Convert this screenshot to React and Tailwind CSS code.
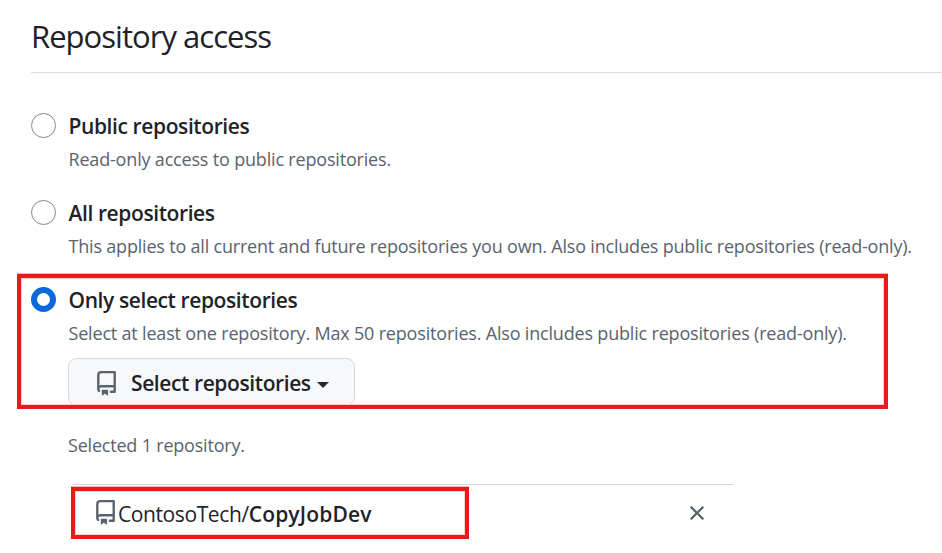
const RepoIcon = ({ className }) => (
  <svg viewBox="0 0 16 16" fill="currentColor" className={className}>
    <path d="M2 2.5A2.5 2.5 0 0 1 4.5 0h8.75a.75.75 0 0 1 .75.75v12.5a.75.75 0 0 1-.75.75h-2.5a.75.75 0 0 1 0-1.5h1.75v-2h-8a1 1 0 0 0-.714 1.7.75.75 0 1 1-1.072 1.05A2.495 2.495 0 0 1 2 11.5Zm10.5-1h-8a1 1 0 0 0-1 1v6.708A2.486 2.486 0 0 1 4.5 9h8ZM5 12.25a.25.25 0 0 1 .25-.25h3.5a.25.25 0 0 1 .25.25v3.25a.25.25 0 0 1-.4.2l-1.45-1.087a.249.249 0 0 0-.3 0L5.4 15.7a.25.25 0 0 1-.4-.2Z" />
  </svg>
);

const XIcon = ({ className }) => (
  <svg viewBox="0 0 16 16" fill="currentColor" className={className}>
    <path d="M3.72 3.72a.75.75 0 0 1 1.06 0L8 6.94l3.22-3.22a.749.749 0 0 1 1.275.326.749.749 0 0 1-.215.734L9.06 8l3.22 3.22a.749.749 0 0 1-.326 1.275.749.749 0 0 1-.734-.215L8 9.06l-3.22 3.22a.751.751 0 0 1-1.042-.018.751.751 0 0 1-.018-1.042L6.94 8 3.72 4.78a.75.75 0 0 1 0-1.06Z" />
  </svg>
);

const options = [
  {
    title: "Public repositories",
    description: "Read-only access to public repositories.",
    descriptionClass: "tracking-[-0.18px]",
  },
  {
    title: "All repositories",
    description:
      "This applies to all current and future repositories you own. Also includes public repositories (read-only).",
    descriptionClass: "tracking-[-0.195px]",
  },
  {
    title: "Only select repositories",
    description:
      "Select at least one repository. Max 50 repositories. Also includes public repositories (read-only).",
    descriptionClass: "tracking-[-0.185px]",
    selected: true,
  },
];

function Option({ title, description, descriptionClass, selected }) {
  return (
    <label className="flex gap-[12.5px]">
      <span
        className={
          selected
            ? "mt-[5px] size-[25px] shrink-0 rounded-full border-[6px] border-[#0969da] bg-white"
            : "mt-[5px] size-[25px] shrink-0 rounded-full border border-[#818b98] bg-white"
        }
      />
      <span className="flex flex-col whitespace-nowrap">
        <span className="text-[21px] leading-9 font-semibold">
          <span className="tracking-[-0.4px]">{title}</span>
        </span>
        <span className="text-[18px] leading-[30px] text-[#59636e]">
          <span className={descriptionClass}>{description}</span>
        </span>
      </span>
    </label>
  );
}

export default function App() {
  return (
    <main className="relative h-[553px] w-[942px] overflow-hidden bg-white pl-[31px] font-['Open_Sans','Noto_Sans',sans-serif] text-[#1f2328]">
      <h2 className="h-[73px] border-b border-[#d9dee4] pt-[14px] text-[31px] leading-[44px]">
        <span className="tracking-[-0.97px]">Repository access</span>
      </h2>
      <div className="flex flex-col gap-[21px] pt-[35px]">
        {options.map((o) => (
          <Option key={o.title} {...o} />
        ))}
      </div>
      <div className="ml-[37px] pt-[10px]">
        <button className="flex h-12 w-[287px] items-center rounded-[9px] border border-[#d1d9e0] bg-[#f6f8fa] pt-[3px] pl-[25px] text-[21px] font-semibold whitespace-nowrap">
          <RepoIcon className="size-[25px] shrink-0 text-[#59636e]" />
          <span className="ml-3 w-[186px] text-left tracking-[-0.4px]">Select repositories</span>
          <span className="mt-[2px] border-x-[6px] border-t-[6px] border-x-transparent border-t-[#25292e]" />
        </button>
        <p className="mt-6 text-[18px] leading-[30px] text-[#59636e]">
          <span className="tracking-[-0.2px]">Selected 1 repository.</span>
        </p>
        <div className="mt-6 ml-[5px] flex h-[58px] w-[661px] items-center border-t border-[#d1d9e0] pl-5 text-[21px] leading-9 whitespace-nowrap">
          <RepoIcon className="mb-[2px] size-[25px] shrink-0 text-[#59636e]" />
          <span className="tracking-[-0.4px]">ContosoTech/</span>
          <b className="font-semibold tracking-[0.15px]">CopyJobDev</b>
          <XIcon className="mr-[25px] mb-px ml-auto size-6 text-[#59636e]" />
        </div>
      </div>
      <div className="absolute top-[274px] left-[17px] h-[135px] w-[871px] border-4 border-[#e81b1b] shadow-[0_-1px_#f6b3b3,inset_0_0_0_1px_#fad1d1]" />
      <div className="absolute top-[487px] left-[71px] h-[52px] w-[398px] border-4 border-[#e81b1b] shadow-[0_-1px_#f6b3b3,inset_0_0_0_1px_#fad1d1]" />
    </main>
  );
}
